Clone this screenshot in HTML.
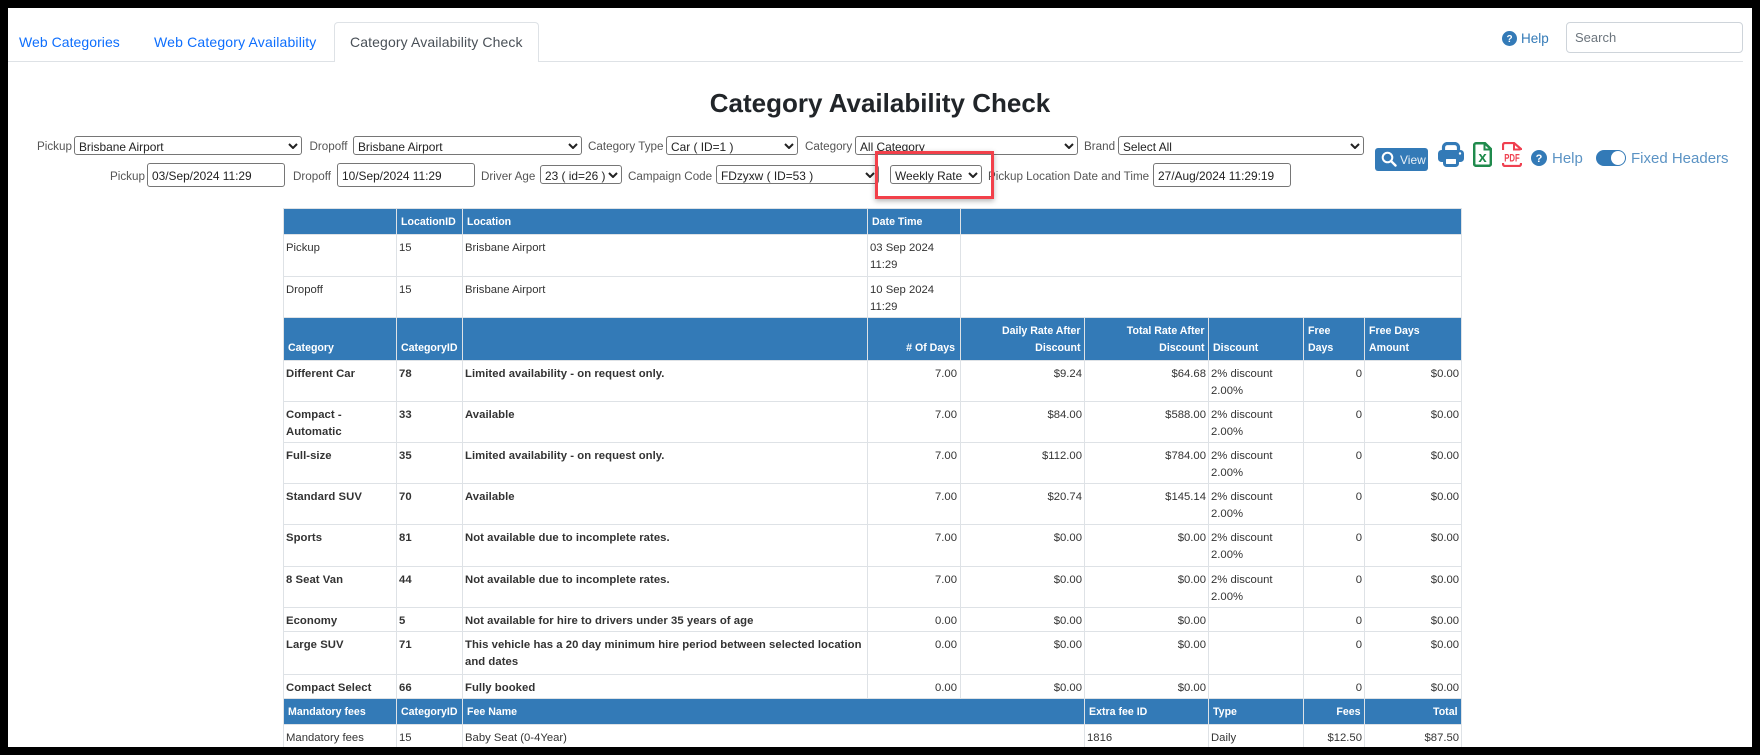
<!DOCTYPE html>
<html><head><meta charset="utf-8"><title>Category Availability Check</title>
<style>
*{box-sizing:border-box}
html,body{margin:0;padding:0;width:1760px;height:755px;overflow:hidden;background:#000}
body{font-family:"Liberation Sans",Arial,sans-serif}
#page{position:absolute;left:8px;top:8px;width:1744px;height:739px;background:#fff;overflow:hidden}
#wrap{position:absolute;left:-8px;top:-8px;width:1760px;height:755px}
.a{position:absolute;white-space:nowrap}
.tab{font-size:14px;line-height:20px;top:32px;color:#0d6efd}
.l{font-size:11.65px;line-height:20px;color:#555}
select,input{font-family:"Liberation Sans",Arial,sans-serif;font-size:11.9px;color:#222;background:#fff;border:1px solid #767676;border-radius:3px}
.s{position:absolute;height:19px}
.s select{position:absolute;left:0;top:0;width:100%;height:100%;margin:0;padding:2px 14px 0 4px;appearance:none;-webkit-appearance:none}
.s svg{position:absolute;right:4px;top:7px;pointer-events:none}
input{position:absolute;margin:0;height:24px;padding:1px 4px 0}
input::placeholder{color:#6c757d;opacity:1}
table{position:absolute;left:283px;top:208px;width:1178px;table-layout:fixed;border-collapse:collapse;font-size:11.3px;line-height:17px;color:#333}
td,th{border:1px solid #dee2e6;padding:5px 2px 0;vertical-align:top;white-space:nowrap;overflow:hidden;text-align:left;font-weight:400}
th{background:#337ab7;color:#fff;font-weight:700;font-size:10.6px;padding:0 3.5px 3px 4px;vertical-align:bottom}
.b td.t{font-weight:700;letter-spacing:.05px}
.r{text-align:right}
.b td:nth-child(4){padding-right:3px}
</style></head><body>
<div id="page"><div id="wrap">

<div class="a" style="left:8px;top:61px;width:1735px;height:1px;background:#dee2e6"></div>
<div class="a" style="left:334px;top:22px;width:205px;height:40px;background:#fff;border:1px solid #dee2e6;border-bottom:0;border-radius:4px 4px 0 0"></div>
<span class="a tab" style="left:19px;letter-spacing:.05px">Web Categories</span>
<span class="a tab" style="left:154px;letter-spacing:.17px">Web Category Availability</span>
<span class="a tab" style="left:350px;color:#495057;letter-spacing:.12px">Category Availability Check</span>

<svg class="a" style="left:1501.5px;top:31px" width="15" height="15" viewBox="0 0 15 15"><circle cx="7.5" cy="7.5" r="7.5" fill="#337ab7"/><text x="7.5" y="11" text-anchor="middle" font-family="Liberation Sans" font-weight="700" font-size="10" fill="#fff">?</text></svg>
<span class="a" style="left:1521px;top:29px;font-size:13.5px;line-height:20px;color:#337ab7">Help</span>
<input style="left:1566px;top:22px;width:177px;height:31px;border:1px solid #ced4da;border-radius:4px;padding:0 8px;font-size:13px" placeholder="Search">

<div class="a" style="left:0;top:86px;width:1760px;text-align:center;font-size:26px;font-weight:700;line-height:34px;color:#212529">Category Availability Check</div>

<span class="a l" style="left:37px;top:137px">Pickup</span>
<div class="s" style="left:74px;top:136px;width:228px"><select><option>Brisbane Airport</option></select><svg width="10" height="6" viewBox="0 0 10 6"><path d="M1 1L5 5L9 1" fill="none" stroke="#222" stroke-width="2"/></svg></div>
<span class="a l" style="left:309.5px;top:137px">Dropoff</span>
<div class="s" style="left:353px;top:136px;width:229px"><select><option>Brisbane Airport</option></select><svg width="10" height="6" viewBox="0 0 10 6"><path d="M1 1L5 5L9 1" fill="none" stroke="#222" stroke-width="2"/></svg></div>
<span class="a l" style="left:588px;top:137px">Category Type</span>
<div class="s" style="left:666px;top:136px;width:132px"><select><option>Car ( ID=1 )</option></select><svg width="10" height="6" viewBox="0 0 10 6"><path d="M1 1L5 5L9 1" fill="none" stroke="#222" stroke-width="2"/></svg></div>
<span class="a l" style="left:805px;top:137px">Category</span>
<div class="s" style="left:855px;top:136px;width:223px"><select><option>All Category</option></select><svg width="10" height="6" viewBox="0 0 10 6"><path d="M1 1L5 5L9 1" fill="none" stroke="#222" stroke-width="2"/></svg></div>
<span class="a l" style="left:1084px;top:137px">Brand</span>
<div class="s" style="left:1118px;top:136px;width:246px"><select><option>Select All</option></select><svg width="10" height="6" viewBox="0 0 10 6"><path d="M1 1L5 5L9 1" fill="none" stroke="#222" stroke-width="2"/></svg></div>

<span class="a l" style="left:110px;top:167px">Pickup</span>
<input style="left:147px;top:163px;width:138px" value="03/Sep/2024 11:29">
<span class="a l" style="left:293px;top:167px">Dropoff</span>
<input style="left:337px;top:163px;width:138px" value="10/Sep/2024 11:29">
<span class="a l" style="left:481px;top:167px">Driver Age</span>
<div class="s" style="left:540px;top:165px;width:82px"><select><option>23 ( id=26 )</option></select><svg width="10" height="6" viewBox="0 0 10 6"><path d="M1 1L5 5L9 1" fill="none" stroke="#222" stroke-width="2"/></svg></div>
<span class="a l" style="left:628px;top:167px">Campaign Code</span>
<div class="s" style="left:716px;top:165px;width:163px"><select><option>FDzyxw ( ID=53 )</option></select><svg width="10" height="6" viewBox="0 0 10 6"><path d="M1 1L5 5L9 1" fill="none" stroke="#222" stroke-width="2"/></svg></div>
<div class="s" style="left:890px;top:165px;width:92px"><select><option>Weekly Rate</option></select><svg width="10" height="6" viewBox="0 0 10 6"><path d="M1 1L5 5L9 1" fill="none" stroke="#222" stroke-width="2"/></svg></div>
<span class="a l" style="left:988px;top:167px">Pickup Location Date and Time</span>
<input style="left:1153px;top:163px;width:138px" value="27/Aug/2024 11:29:19">

<div class="a" style="left:875px;top:151px;width:119px;height:48px;border:3px solid #f2404a;box-shadow:0 2px 5px rgba(0,0,0,.3)"></div>

<div class="a" style="left:1375px;top:148px;width:53px;height:23px;background:#337ab7;border-radius:3px"></div>
<svg class="a" style="left:1381px;top:151px" width="16" height="16" viewBox="0 0 16 16"><circle cx="6.5" cy="6.5" r="4.8" fill="none" stroke="#fff" stroke-width="2"/><path d="M10.2 10.2L14.5 14.5" stroke="#fff" stroke-width="2.4" stroke-linecap="round"/></svg>
<span class="a" style="left:1400px;top:150px;font-size:12px;line-height:20px;color:#e8f0f7">View</span>

<svg class="a" style="left:1438px;top:142px" width="26" height="25" viewBox="0 0 26 25">
<path d="M5.5 10V5.5a4 4 0 0 1 4-4h7a4 4 0 0 1 4 4V10" fill="none" stroke="#337ab7" stroke-width="3.2"/>
<rect x="0" y="8" width="26" height="12" rx="3.5" fill="#337ab7"/>
<circle cx="22" cy="11.5" r="1.2" fill="#fff"/>
<rect x="6.5" y="15.5" width="13" height="8" rx="2" fill="#fff" stroke="#337ab7" stroke-width="3"/>
</svg>
<svg class="a" style="left:1473px;top:142px" width="19" height="25" viewBox="0 0 19 25">
<path d="M3 1.3H12L17.8 7V22a1.8 1.8 0 0 1-1.8 1.8H3a1.8 1.8 0 0 1-1.8-1.8V3.1a1.8 1.8 0 0 1 1.8-1.8z" fill="#fff" stroke="#1f8a4c" stroke-width="2.5"/>
<path d="M11.5 1.5V7.5H17.5" fill="none" stroke="#1f8a4c" stroke-width="2"/>
<text x="9.5" y="20" text-anchor="middle" font-family="Liberation Sans" font-weight="700" font-size="15" fill="#1f8a4c">x</text>
</svg>
<svg class="a" style="left:1502px;top:142px" width="20" height="25" viewBox="0 0 20 25">
<path d="M1 8V3a2 2 0 0 1 2-2h9l7 6v1" fill="none" stroke="#ef4050" stroke-width="2.2"/>
<path d="M12 1.5V7.5H18.5" fill="none" stroke="#ef4050" stroke-width="2"/>
<path d="M1 21v1a2 2 0 0 0 2 2h14a2 2 0 0 0 2-2v-1" fill="none" stroke="#ef4050" stroke-width="2.2"/>
<text x="10" y="19.5" text-anchor="middle" font-family="Liberation Sans" font-weight="700" font-size="11" fill="#ef4050" textLength="15.5" lengthAdjust="spacingAndGlyphs">PDF</text>
</svg>

<svg class="a" style="left:1531px;top:150px" width="16" height="16" viewBox="0 0 16 16"><circle cx="8" cy="8" r="8" fill="#337ab7"/><text x="8" y="12" text-anchor="middle" font-family="Liberation Sans" font-weight="700" font-size="11" fill="#fff">?</text></svg>
<span class="a" style="left:1552px;top:149px;font-size:15px;line-height:20px;color:#5b93c4">Help</span>
<div class="a" style="left:1596px;top:150px;width:30px;height:16px;background:#337ab7;border-radius:8px"></div>
<div class="a" style="left:1610.5px;top:151px;width:14px;height:14px;background:#fff;border-radius:50%"></div>
<span class="a" style="left:1631px;top:149px;font-size:15px;line-height:20px;color:#5b93c4">Fixed Headers</span>

<table>
<colgroup><col style="width:113px"><col style="width:66px"><col style="width:405px"><col style="width:93px"><col style="width:124px"><col style="width:124px"><col style="width:95px"><col style="width:61px"><col style="width:97px"></colgroup>
<tr style="height:26px"><th></th><th>LocationID</th><th>Location</th><th>Date Time</th><th colspan="5"></th></tr>
<tr style="height:42px"><td>Pickup</td><td>15</td><td>Brisbane Airport</td><td>03 Sep 2024<br>11:29</td><td colspan="5"></td></tr>
<tr style="height:41px"><td>Dropoff</td><td>15</td><td>Brisbane Airport</td><td>10 Sep 2024<br>11:29</td><td colspan="5"></td></tr>
<tr style="height:43px"><th>Category</th><th>CategoryID</th><th></th><th class="r" style="padding-right:5px"># Of Days</th><th class="r">Daily Rate After<br>Discount</th><th class="r">Total Rate After<br>Discount</th><th>Discount</th><th>Free<br>Days</th><th>Free Days<br>Amount</th></tr>
<tbody class="b">
<tr style="height:41px"><td class="t">Different Car</td><td class="t">78</td><td class="t">Limited availability - on request only.</td><td class="r">7.00</td><td class="r">$9.24</td><td class="r">$64.68</td><td>2% discount<br>2.00%</td><td class="r">0</td><td class="r">$0.00</td></tr>
<tr style="height:41px"><td class="t">Compact -<br>Automatic</td><td class="t">33</td><td class="t">Available</td><td class="r">7.00</td><td class="r">$84.00</td><td class="r">$588.00</td><td>2% discount<br>2.00%</td><td class="r">0</td><td class="r">$0.00</td></tr>
<tr style="height:41px"><td class="t">Full-size</td><td class="t">35</td><td class="t">Limited availability - on request only.</td><td class="r">7.00</td><td class="r">$112.00</td><td class="r">$784.00</td><td>2% discount<br>2.00%</td><td class="r">0</td><td class="r">$0.00</td></tr>
<tr style="height:41px"><td class="t">Standard SUV</td><td class="t">70</td><td class="t">Available</td><td class="r">7.00</td><td class="r">$20.74</td><td class="r">$145.14</td><td>2% discount<br>2.00%</td><td class="r">0</td><td class="r">$0.00</td></tr>
<tr style="height:42px"><td class="t">Sports</td><td class="t">81</td><td class="t">Not available due to incomplete rates.</td><td class="r">7.00</td><td class="r">$0.00</td><td class="r">$0.00</td><td>2% discount<br>2.00%</td><td class="r">0</td><td class="r">$0.00</td></tr>
<tr style="height:41px"><td class="t">8 Seat Van</td><td class="t">44</td><td class="t">Not available due to incomplete rates.</td><td class="r">7.00</td><td class="r">$0.00</td><td class="r">$0.00</td><td>2% discount<br>2.00%</td><td class="r">0</td><td class="r">$0.00</td></tr>
<tr style="height:24px"><td class="t">Economy</td><td class="t">5</td><td class="t">Not available for hire to drivers under 35 years of age</td><td class="r">0.00</td><td class="r">$0.00</td><td class="r">$0.00</td><td></td><td class="r">0</td><td class="r">$0.00</td></tr>
<tr style="height:43px"><td class="t">Large SUV</td><td class="t">71</td><td class="t">This vehicle has a 20 day minimum hire period between selected location<br>and dates</td><td class="r">0.00</td><td class="r">$0.00</td><td class="r">$0.00</td><td></td><td class="r">0</td><td class="r">$0.00</td></tr>
<tr style="height:24px"><td class="t">Compact Select</td><td class="t">66</td><td class="t">Fully booked</td><td class="r">0.00</td><td class="r">$0.00</td><td class="r">$0.00</td><td></td><td class="r">0</td><td class="r">$0.00</td></tr>
</tbody>
<tr style="height:26px"><th>Mandatory fees</th><th>CategoryID</th><th colspan="3">Fee Name</th><th>Extra fee ID</th><th>Type</th><th class="r">Fees</th><th class="r">Total</th></tr>
<tr style="height:42px"><td>Mandatory fees</td><td>15</td><td colspan="3">Baby Seat (0-4Year)</td><td>1816</td><td>Daily</td><td class="r">$12.50</td><td class="r">$87.50</td></tr>
</table>
</div></div>
</body></html>
